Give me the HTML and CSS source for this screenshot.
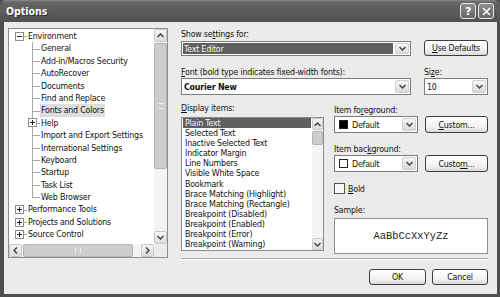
FILE: index.html
```html
<!DOCTYPE html>
<html lang="en">
<head>
  <meta charset="UTF-8">
  <title>Options</title>
  <link rel="stylesheet" href="styles.css">
</head>
<body>
  <div class="window">
    <div class="titlebar">
      <span class="title">Options</span>
      <div class="caption-btns">
        <span class="cap-btn">?</span>
        <span class="cap-btn">
          <svg width="9" height="9" viewBox="0 0 9 9"><path d="M1 1 L8 8 M8 1 L1 8" stroke="#fff" stroke-width="1.6"/></svg>
        </span>
      </div>
    </div>

    <div class="client">
      <!-- Category tree -->
      <div class="tree">
        <div class="tree-items">
          <div class="node"><span class="guide stub"><svg class="exp" width="9" height="9" viewBox="0 0 9 9"><rect x="0.5" y="0.5" width="8" height="8" fill="#fff" stroke="#8c8c8c"/><path d="M2 4.5 H7" stroke="#222"/></svg></span><span class="label">Environment</span></div>
          <div class="node"><span class="guide"></span><span class="guide tee"></span><span class="label">General</span></div>
          <div class="node"><span class="guide"></span><span class="guide tee"></span><span class="label">Add-in/Macros Security</span></div>
          <div class="node"><span class="guide"></span><span class="guide tee"></span><span class="label">AutoRecover</span></div>
          <div class="node"><span class="guide"></span><span class="guide tee"></span><span class="label">Documents</span></div>
          <div class="node"><span class="guide"></span><span class="guide tee"></span><span class="label">Find and Replace</span></div>
          <div class="node"><span class="guide"></span><span class="guide tee"></span><span class="label selected">Fonts and Colors</span></div>
          <div class="node"><span class="guide"></span><span class="guide tee"><svg class="exp" width="9" height="9" viewBox="0 0 9 9"><rect x="0.5" y="0.5" width="8" height="8" fill="#fff" stroke="#8c8c8c"/><path d="M2 4.5 H7 M4.5 2 V7" stroke="#222"/></svg></span><span class="label">Help</span></div>
          <div class="node"><span class="guide"></span><span class="guide tee"></span><span class="label">Import and Export Settings</span></div>
          <div class="node"><span class="guide"></span><span class="guide tee"></span><span class="label">International Settings</span></div>
          <div class="node"><span class="guide"></span><span class="guide tee"></span><span class="label">Keyboard</span></div>
          <div class="node"><span class="guide"></span><span class="guide tee"></span><span class="label">Startup</span></div>
          <div class="node"><span class="guide"></span><span class="guide tee"></span><span class="label">Task List</span></div>
          <div class="node"><span class="guide"></span><span class="guide tee end"></span><span class="label">Web Browser</span></div>
          <div class="node"><span class="guide stub"><svg class="exp" width="9" height="9" viewBox="0 0 9 9"><rect x="0.5" y="0.5" width="8" height="8" fill="#fff" stroke="#8c8c8c"/><path d="M2 4.5 H7 M4.5 2 V7" stroke="#222"/></svg></span><span class="label">Performance Tools</span></div>
          <div class="node"><span class="guide stub"><svg class="exp" width="9" height="9" viewBox="0 0 9 9"><rect x="0.5" y="0.5" width="8" height="8" fill="#fff" stroke="#8c8c8c"/><path d="M2 4.5 H7 M4.5 2 V7" stroke="#222"/></svg></span><span class="label">Projects and Solutions</span></div>
          <div class="node"><span class="guide stub"><svg class="exp" width="9" height="9" viewBox="0 0 9 9"><rect x="0.5" y="0.5" width="8" height="8" fill="#fff" stroke="#8c8c8c"/><path d="M2 4.5 H7 M4.5 2 V7" stroke="#222"/></svg></span><span class="label">Source Control</span></div>
        </div>

        <div class="vscroll">
          <span class="sb-btn"><svg width="7" height="5" viewBox="0 0 7 5"><path d="M0.5 4 L3.5 1 L6.5 4" fill="none" stroke="#444" stroke-width="1.5"/></svg></span>
          <div class="sb-track">
            <span class="sb-thumb tree-thumb"><span class="grip"></span></span>
          </div>
          <span class="sb-btn"><svg width="7" height="5" viewBox="0 0 7 5"><path d="M0.5 1 L3.5 4 L6.5 1" fill="none" stroke="#444" stroke-width="1.5"/></svg></span>
        </div>

        <div class="hscroll">
          <span class="sb-btn"><svg width="5" height="7" viewBox="0 0 5 7"><path d="M4 0.5 L1 3.5 L4 6.5" fill="none" stroke="#444" stroke-width="1.5"/></svg></span>
          <div class="sb-track h">
            <span class="sb-thumb h-thumb"><span class="grip v"></span></span>
          </div>
          <span class="sb-btn"><svg width="5" height="7" viewBox="0 0 5 7"><path d="M1 0.5 L4 3.5 L1 6.5" fill="none" stroke="#444" stroke-width="1.5"/></svg></span>
        </div>
        <div class="sb-corner"></div>
      </div>

      <!-- Settings -->
      <div class="settings">
        <div class="top-grid">
          <div class="lbl">Show se<u>t</u>tings for:</div>
          <div></div>
          <div class="combo">
            <span class="val sel">Text Editor</span>
            <span class="drop"><svg width="7" height="5" viewBox="0 0 7 5"><path d="M0.5 1 L3.5 4 L6.5 1" fill="none" stroke="#444" stroke-width="1.5"/></svg></span>
          </div>
          <button class="btn"><u>U</u>se Defaults</button>

          <div class="lbl gap-top"><u>F</u>ont (bold type indicates fixed-width fonts):</div>
          <div class="lbl gap-top">Si<u>z</u>e:</div>
          <div class="combo tall">
            <span class="val bold">Courier New</span>
            <span class="drop"><svg width="7" height="5" viewBox="0 0 7 5"><path d="M0.5 1 L3.5 4 L6.5 1" fill="none" stroke="#444" stroke-width="1.5"/></svg></span>
          </div>
          <div class="combo tall">
            <span class="val">10</span>
            <span class="drop"><svg width="7" height="5" viewBox="0 0 7 5"><path d="M0.5 1 L3.5 4 L6.5 1" fill="none" stroke="#444" stroke-width="1.5"/></svg></span>
          </div>
        </div>

        <div class="lower">
          <div class="items-col">
            <div class="lbl"><u>D</u>isplay items:</div>
            <div class="listbox">
              <div class="list-items">
                <div class="item selected">Plain Text</div>
                <div class="item">Selected Text</div>
                <div class="item">Inactive Selected Text</div>
                <div class="item">Indicator Margin</div>
                <div class="item">Line Numbers</div>
                <div class="item">Visible White Space</div>
                <div class="item">Bookmark</div>
                <div class="item">Brace Matching (Highlight)</div>
                <div class="item">Brace Matching (Rectangle)</div>
                <div class="item">Breakpoint (Disabled)</div>
                <div class="item">Breakpoint (Enabled)</div>
                <div class="item">Breakpoint (Error)</div>
                <div class="item">Breakpoint (Warning)</div>
              </div>
              <div class="vscroll slim">
                <span class="sb-btn"><svg width="7" height="5" viewBox="0 0 7 5"><path d="M0.5 4 L3.5 1 L6.5 4" fill="none" stroke="#444" stroke-width="1.5"/></svg></span>
                <div class="sb-track">
                  <span class="sb-thumb list-thumb"></span>
                </div>
                <span class="sb-btn"><svg width="7" height="5" viewBox="0 0 7 5"><path d="M0.5 1 L3.5 4 L6.5 1" fill="none" stroke="#444" stroke-width="1.5"/></svg></span>
              </div>
            </div>
          </div>

          <div class="color-col">
            <div class="lbl">Item fo<u>r</u>eground:</div>
            <div class="color-row">
              <div class="combo tall color">
                <span class="val"><span class="swatch black"></span>Default</span>
                <span class="drop"><svg width="7" height="5" viewBox="0 0 7 5"><path d="M0.5 1 L3.5 4 L6.5 1" fill="none" stroke="#444" stroke-width="1.5"/></svg></span>
              </div>
              <button class="btn tall"><u>C</u>ustom...</button>
            </div>

            <div class="lbl gap-top">Item bac<u>k</u>ground:</div>
            <div class="color-row">
              <div class="combo tall color">
                <span class="val"><span class="swatch"></span>Default</span>
                <span class="drop"><svg width="7" height="5" viewBox="0 0 7 5"><path d="M0.5 1 L3.5 4 L6.5 1" fill="none" stroke="#444" stroke-width="1.5"/></svg></span>
              </div>
              <button class="btn tall">Custo<u>m</u>...</button>
            </div>

            <label class="check"><span class="box"></span><span><u>B</u>old</span></label>

            <div class="lbl sample-lbl">Sample:</div>
            <div class="sample">AaBbCcXxYyZz</div>
          </div>
        </div>

        <div class="separator"></div>

        <div class="actions">
          <button class="btn ok">OK</button>
          <button class="btn cancel">Cancel</button>
        </div>
      </div>
    </div>
  </div>
</body>
</html>
```

FILE: styles.css
```css
:root {
  --frame: #4e4e4e;
  --face: #ebebeb;
  --border: #8c8c8c;
  --text: #111111;
  --select: #5f5f5f;
  --ui-font: "DejaVu Sans Condensed", "Liberation Sans", sans-serif;
}

html, body {
  margin: 0;
  padding: 0;
  background: #ffffff;
}

.window {
  width: 500px;
  height: 297px;
  box-sizing: border-box;
  background: var(--frame);
  padding: 0 3px 3px 4px;
  display: flex;
  flex-direction: column;
  font-family: var(--ui-font);
  font-size: 8.8px;
  letter-spacing: -0.2px;
  color: var(--text);
}

/* Title bar */
.titlebar {
  height: 22px;
  margin: 0 -3px 0 -4px;
  padding: 0 6px 0 6px;
  display: flex;
  align-items: center;
  justify-content: space-between;
  background: linear-gradient(#8a8a8a 0, #666 2px, #5a5a5a 60%, #505050);
  border-radius: 6px 6px 0 0;
  flex: none;
}

.title {
  color: #ffffff;
  font-weight: bold;
  font-size: 10.5px;
  letter-spacing: 0;
  text-shadow: 1px 1px 0 #333;
}

.caption-btns {
  display: flex;
  gap: 2px;
}

.cap-btn {
  width: 16px;
  height: 16px;
  box-sizing: border-box;
  border: 1px solid #e8e8e8;
  border-radius: 3px;
  background: linear-gradient(#8c8c8c, #666);
  color: #ffffff;
  font: bold 11px "DejaVu Sans", sans-serif;
  display: flex;
  align-items: center;
  justify-content: center;
}

/* Client area */
.client {
  flex: 1;
  background: var(--face);
  display: flex;
  gap: 13px;
  padding: 6px 9px 0 4px;
}

.tree {
  width: 160px;
  height: 230px;
  box-sizing: border-box;
  border: 1px solid var(--border);
  background: #ffffff;
  display: grid;
  grid-template-columns: 1fr 13px;
  grid-template-rows: 1fr 13px;
  flex: none;
}

.tree-items {
  padding: 1px 0 0 4px;
  overflow: hidden;
}

.node {
  height: 12.4px;
  display: flex;
  align-items: stretch;
  white-space: nowrap;
}

.guide {
  width: 13px;
  flex: none;
  position: relative;
  display: flex;
  align-items: center;
  justify-content: center;
}

.guide.tee::before {
  content: "";
  position: absolute;
  left: 6px;
  top: 0;
  bottom: 0;
  border-left: 1px solid #a9a9a9;
}

.guide.tee.end::before {
  bottom: 50%;
}

.guide.tee::after,
.guide.stub::after {
  content: "";
  position: absolute;
  left: 6px;
  right: -1px;
  top: 50%;
  border-top: 1px solid #a9a9a9;
}

.exp {
  position: relative;
  z-index: 1;
}

.label {
  margin-left: 1px;
  padding: 0 1px;
  line-height: 12.4px;
}

.label.selected {
  background: #dedede;
}

/* Scrollbars */
.vscroll {
  display: flex;
  flex-direction: column;
  background: #f3f3f3;
}

.hscroll {
  display: flex;
  background: #f3f3f3;
}

.sb-btn {
  flex: none;
  width: 13px;
  height: 13px;
  box-sizing: border-box;
  border: 1px solid #c9c9c9;
  border-radius: 2px;
  background: linear-gradient(#f4f4f4, #dcdcdc);
  display: flex;
  align-items: center;
  justify-content: center;
}

.sb-track {
  flex: 1;
  display: flex;
  flex-direction: column;
  padding: 1px 0;
}

.sb-track.h {
  flex-direction: row;
  padding: 0 1px;
}

.sb-thumb {
  box-sizing: border-box;
  border: 1px solid #b4b4b4;
  border-radius: 2px;
  background: #cdcdcd;
  display: flex;
  align-items: center;
  justify-content: center;
}

.tree-thumb {
  height: 126px;
}

.h-thumb {
  width: 110px;
}

.list-thumb {
  height: 14px;
}

.grip {
  width: 6px;
  height: 4px;
  border-top: 1px solid #eeeeee;
  border-bottom: 1px solid #eeeeee;
}

.grip.v {
  width: 4px;
  height: 5px;
  border: none;
  border-left: 1px solid #eeeeee;
  border-right: 1px solid #eeeeee;
}

.sb-corner {
  background: #ebebeb;
}

/* Settings column */
.settings {
  width: 307px;
  display: flex;
  flex-direction: column;
}

.top-grid {
  display: grid;
  grid-template-columns: 230px 64px;
  column-gap: 13px;
  align-items: end;
}

.lbl {
  height: 12px;
  line-height: 12px;
  white-space: nowrap;
}

.gap-top {
  margin-top: 10px;
}

.combo {
  height: 15px;
  box-sizing: border-box;
  border: 1px solid #7c7c7c;
  background: #ffffff;
  display: flex;
  align-items: stretch;
}

.combo.tall {
  height: 17px;
}

.val {
  flex: 1;
  display: flex;
  align-items: center;
  padding-left: 2px;
  white-space: nowrap;
}

.val.sel {
  margin: 1px;
  padding-left: 1px;
  background: var(--select);
  color: #f4f4f4;
}

.val.bold {
  font-weight: bold;
}

.drop {
  width: 14px;
  margin: 1px;
  box-sizing: border-box;
  border: 1px solid #cfcfcf;
  border-radius: 2px;
  background: linear-gradient(#f6f6f6, #dadada);
  display: flex;
  align-items: center;
  justify-content: center;
}

.btn {
  height: 16px;
  box-sizing: border-box;
  padding: 0;
  border: 1px solid #3e3e3e;
  border-radius: 3px;
  background: linear-gradient(#ffffff, #f0f0f0 70%, #d8d8d8);
  font-family: var(--ui-font);
  font-size: 8.8px;
  letter-spacing: -0.2px;
  color: var(--text);
  display: flex;
  align-items: center;
  justify-content: center;
}

.btn.tall {
  height: 17px;
}

.lower {
  display: grid;
  grid-template-columns: 143px 154px;
  column-gap: 10px;
  margin-top: 7px;
}

.listbox {
  margin-top: 3px;
  height: 134px;
  box-sizing: border-box;
  border: 1px solid var(--border);
  background: #ffffff;
  display: flex;
}

.list-items {
  flex: 1;
  padding: 0 1px;
  overflow: hidden;
}

.item {
  height: 10.1px;
  line-height: 10.1px;
  padding-left: 2px;
  white-space: nowrap;
}

.item.selected {
  background: var(--select);
  color: #f4f4f4;
}

.vscroll.slim .sb-btn {
  width: 11px;
  height: 12px;
}

.color-col {
  padding-top: 2px;
}

.color-row {
  display: flex;
  gap: 7px;
}

.combo.color {
  width: 84px;
}

.color-row .btn {
  width: 63px;
}

.swatch {
  width: 9px;
  height: 9px;
  box-sizing: border-box;
  border: 1px solid #222;
  background: #ffffff;
  margin: 0 4px 0 2px;
}

.swatch.black {
  background: #000000;
}

.check {
  margin-top: 11px;
  display: flex;
  align-items: center;
  gap: 3px;
  height: 11px;
}

.box {
  width: 11px;
  height: 11px;
  box-sizing: border-box;
  border: 1px solid #555;
  background: #f7f7f7;
}

.sample-lbl {
  margin-top: 10px;
}

.sample {
  margin-top: 2px;
  height: 36px;
  box-sizing: border-box;
  border: 1px solid var(--border);
  background: #ffffff;
  font-family: "Liberation Mono", monospace;
  font-size: 10.4px;
  letter-spacing: 0;
  color: #222;
  display: flex;
  align-items: center;
  justify-content: center;
}

.separator {
  margin-top: 4px;
  height: 1px;
  background: #a6a6a6;
  border-bottom: 1px solid #ffffff;
}

.actions {
  margin-top: 9px;
  display: flex;
  justify-content: flex-end;
  gap: 6px;
}

.ok {
  width: 57px;
}

.cancel {
  width: 56px;
}
```
